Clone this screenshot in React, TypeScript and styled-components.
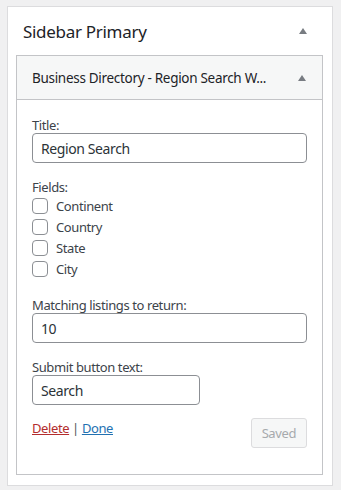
import { createGlobalStyle, styled } from 'styled-components';

const Global = createGlobalStyle`
    html, body {
        margin: 0;
        padding: 0;
        background: #f0f0f1;
    }
    body {
        font-family: "Noto Sans", "Open Sans", sans-serif;
        font-size: 13px;
        letter-spacing: -0.4px;
        color: #3c434a;
    }
`;

const Page = styled.div`
    width: 341px;
    height: 490px;
    padding: 6px 8px 4px 7px;
    box-sizing: border-box;
`;

const Sidebar = styled.div`
    background: #fff;
    border: 1px solid #dcdcde;
    height: 100%;
    box-sizing: border-box;
    padding: 0 9px 10px 8px;
    display: flex;
    flex-direction: column;
`;

const SidebarHeader = styled.div`
    display: flex;
    justify-content: space-between;
    align-items: center;
    height: 48px;
    padding: 0 16px 0 7px;
`;

const SidebarTitle = styled.h2`
    margin: 0;
    font-size: 17px;
    font-weight: 400;
    letter-spacing: -0.3px;
    color: #1d2327;
`;

const Arrow = styled.span`
    width: 0;
    height: 0;
    border-left: 4px solid transparent;
    border-right: 4px solid transparent;
    border-bottom: 6px solid #787c82;
`;

const Widget = styled.div`
    border: 1px solid #c3c4c7;
    flex: 1;
    display: flex;
    flex-direction: column;
`;

const WidgetHeader = styled.div`
    background: #f6f7f7;
    border-bottom: 1px solid #c3c4c7;
    height: 43px;
    display: flex;
    justify-content: space-between;
    align-items: center;
    padding: 0 16px 0 15px;
`;

const WidgetTitle = styled.h3`
    margin: 0;
    font-size: 13.5px;
    font-weight: 400;
    letter-spacing: -0.3px;
    color: #1d2327;
`;

const Form = styled.div`
    padding: 17px 15px 0 15px;
    display: flex;
    flex-direction: column;
`;

const Field = styled.div`
    margin-top: 16px;
    &:first-child {
        margin-top: 0;
    }
`;

const Label = styled.div`
    line-height: 16px;
`;

const TextInput = styled.div<{ $width?: string }>`
    width: ${p => p.$width ?? '100%'};
    height: 30px;
    box-sizing: border-box;
    border: 1px solid #8c8f94;
    border-radius: 4px;
    padding: 0 8px;
    display: flex;
    align-items: center;
    font-size: 14px;
    color: #2c3338;
`;

const CheckList = styled.div`
    padding-bottom: 2px;
`;

const CheckRow = styled.label`
    display: flex;
    align-items: center;
    gap: 8px;
    height: 21px;
`;

const Box = styled.span`
    width: 16px;
    height: 16px;
    box-sizing: border-box;
    border: 1px solid #8c8f94;
    border-radius: 4px;
    background: #fff;
`;

const Actions = styled.div`
    display: flex;
    justify-content: space-between;
    align-items: flex-start;
    margin-top: 13px;
`;

const Links = styled.div`
    line-height: 20px;
    color: #50575e;
`;

const Link = styled.a<{ $danger?: boolean }>`
    color: ${p => (p.$danger ? '#b32d2e' : '#2271b1')};
    text-decoration: underline;
`;

const SavedBtn = styled.button`
    font-family: inherit;
    font-size: 13px;
    letter-spacing: -0.4px;
    height: 30px;
    padding: 0 10px;
    background: #f6f7f7;
    border: 1px solid #dcdcde;
    border-radius: 3px;
    color: #a7aaad;
`;

const fields = ['Continent', 'Country', 'State', 'City'];

export default function App() {
    return (
        <Page>
            <Global />
            <Sidebar>
                <SidebarHeader>
                    <SidebarTitle>Sidebar Primary</SidebarTitle>
                    <Arrow />
                </SidebarHeader>
                <Widget>
                    <WidgetHeader>
                        <WidgetTitle>Business Directory - Region Search W...</WidgetTitle>
                        <Arrow />
                    </WidgetHeader>
                    <Form>
                        <Field>
                            <Label>Title:</Label>
                            <TextInput>Region Search</TextInput>
                        </Field>
                        <Field>
                            <Label>Fields:</Label>
                            <CheckList>
                                {fields.map(f => (
                                    <CheckRow key={f}>
                                        <Box />
                                        {f}
                                    </CheckRow>
                                ))}
                            </CheckList>
                        </Field>
                        <Field>
                            <Label>Matching listings to return:</Label>
                            <TextInput>10</TextInput>
                        </Field>
                        <Field>
                            <Label>Submit button text:</Label>
                            <TextInput $width="168px">Search</TextInput>
                        </Field>
                        <Actions>
                            <Links>
                                <Link $danger href="#">Delete</Link> | <Link href="#">Done</Link>
                            </Links>
                            <SavedBtn disabled>Saved</SavedBtn>
                        </Actions>
                    </Form>
                </Widget>
            </Sidebar>
        </Page>
    );
}
